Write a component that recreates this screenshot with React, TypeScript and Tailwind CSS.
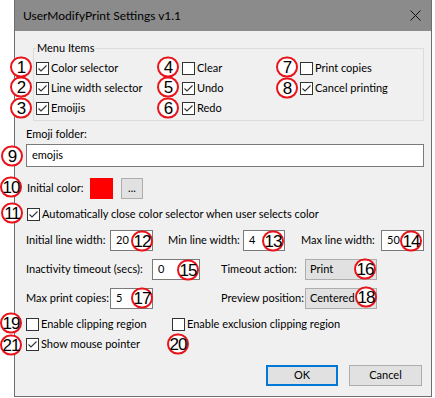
import React from "react";

const font = { fontFamily: "Lato, 'Liberation Sans', sans-serif" };

function Check({ checked = false }: { checked?: boolean }) {
  return (
    <span className="inline-flex w-[13px] h-[13px] shrink-0 border border-[#333333] bg-white items-center justify-center">
      {checked && (
        <svg width="11" height="11" viewBox="0 0 11 11">
          <polyline points="1.5,5.5 4,8 9.5,2.5" fill="none" stroke="#333333" strokeWidth="1.1" />
        </svg>
      )}
    </span>
  );
}

function CheckItem({ label, checked }: { label: string; checked?: boolean }) {
  return (
    <div className="flex items-center gap-[2px] h-[20px]">
      <Check checked={checked} />
      <span>{label}</span>
    </div>
  );
}

function Field({ value, w }: { value: string; w: string }) {
  return (
    <div className={`h-[21px] ${w} bg-white border border-[#7a7a7a] flex items-center pl-[5px]`}>{value}</div>
  );
}

// red numbered markers over the dialog
const marks: [number, number, number][] = [
  [1, 21, 67], [2, 21, 87], [3, 21, 108],
  [4, 168, 67], [5, 168, 87], [6, 168, 108],
  [7, 287, 67], [8, 287, 88],
  [9, 12, 156], [10, 11, 187], [11, 12, 213],
  [12, 142, 241], [13, 273, 241], [14, 411, 241],
  [15, 188, 270], [16, 365, 269],
  [17, 142, 298], [18, 366, 297],
  [19, 11, 323], [20, 178, 344], [21, 11, 345],
];

export default function App() {
  return (
    <div className="relative w-[435px] h-[398px] bg-white overflow-hidden text-[11px] text-black" style={font}>
      <div className="ml-[14px] w-[418px] h-[397px] border-x border-b border-[#6e6e6e] bg-[#f0f0f0] flex flex-col">
        {/* title bar */}
        <div className="h-[31px] bg-[#8b8b8b] flex items-center justify-between pl-[8px] pr-[10px] text-[12px]">
          <span>UserModifyPrint Settings v1.1</span>
          <svg width="11" height="11" viewBox="0 0 11 11">
            <path d="M0.5 0.5 L10.5 10.5 M10.5 0.5 L0.5 10.5" stroke="#111" strokeWidth="1" />
          </svg>
        </div>

        <div className="flex flex-col pl-[11px] pr-[7px] pt-[10px]">
          <fieldset className="ml-[7px] h-[80px] border border-[#dcdcdc] pl-[2px]">
            <legend className="px-[1px] leading-[14px] ml-[0px]">Menu Items</legend>
            <div className="grid grid-cols-[146px_118px_1fr] pt-[3px]">
              <div>
                <CheckItem label="Color selector" checked />
                <CheckItem label="Line width selector" checked />
                <CheckItem label="Emoijis" checked />
              </div>
              <div>
                <CheckItem label="Clear" />
                <CheckItem label="Undo" checked />
                <CheckItem label="Redo" checked />
              </div>
              <div>
                <CheckItem label="Print copies" />
                <CheckItem label="Cancel printing" checked />
              </div>
            </div>
          </fieldset>

          <div className="mt-[6px] h-[15px] flex items-center">Emoji folder:</div>
          <div className="mt-[2px] h-[23px] bg-white border border-[#7a7a7a] flex items-center pl-[5px]">emojis</div>

          <div className="mt-[11px] h-[21px] flex items-center">
            <span className="w-[64px] pl-[1px]">Initial color:</span>
            <span className="w-[23px] h-[21px] bg-[#ff0000]" />
            <span className="ml-[8px] w-[22px] h-[21px] bg-[#e1e1e1] border border-[#adadad] flex items-center justify-center leading-none pb-[3px]">...</span>
          </div>

          <div className="mt-[8px] h-[14px] flex items-center gap-[2px] pl-[1px]">
            <Check checked />
            <span>Automatically close color selector when user selects color</span>
          </div>

          <div className="mt-[9px] h-[21px] flex items-center">
            <span className="w-[84px]">Initial line width:</span>
            <Field value="20" w="w-[43px]" />
            <span className="ml-[15px] w-[75px]">Min line width:</span>
            <Field value="4" w="w-[42px]" />
            <span className="ml-[16px] w-[80px]">Max line width:</span>
            <Field value="50" w="w-[43px]" />
          </div>

          <div className="mt-[8px] h-[21px] flex items-center">
            <span className="w-[126px]">Inactivity timeout (secs):</span>
            <Field value="0" w="w-[48px]" />
            <span className="ml-[21px] w-[84px]">Timeout action:</span>
            <div className="w-[72px] h-[21px] bg-[#e1e1e1] border border-[#adadad] flex items-center pl-[4px]">Print</div>
          </div>

          <div className="mt-[8px] h-[21px] flex items-center">
            <span className="w-[84px]">Max print copies:</span>
            <Field value="5" w="w-[43px]" />
            <span className="ml-[68px] w-[84px]">Preview position:</span>
            <div className="w-[72px] h-[21px] bg-[#e1e1e1] border border-[#adadad] flex items-center pl-[4px]">Centered</div>
          </div>

          <div className="mt-[8px] h-[14px] flex items-center">
            <div className="w-[146px] flex items-center gap-[2px]">
              <Check />
              <span>Enable clipping region</span>
            </div>
            <div className="flex items-center gap-[2px]">
              <Check />
              <span>Enable exclusion clipping region</span>
            </div>
          </div>

          <div className="mt-[6px] h-[14px] flex items-center gap-[2px]">
            <Check checked />
            <span>Show mouse pointer</span>
          </div>

          <div className="mt-[14px] mr-[2px] flex justify-end gap-[11px]">
            <div className="w-[72px] h-[21px] bg-[#e1e1e1] border-2 border-[#0078d7] flex items-center justify-center">OK</div>
            <div className="w-[73px] h-[21px] bg-[#e1e1e1] border border-[#adadad] flex items-center justify-center">Cancel</div>
          </div>
        </div>
      </div>

      {marks.map(([n, x, y]) => (
        <div
          key={n}
          className="absolute w-[22px] h-[21px] -translate-x-1/2 -translate-y-1/2 rounded-full border-2 border-[#e8141b] bg-white flex items-center justify-center text-[17px] leading-none tracking-[-1px]"
          style={{ left: x, top: y, fontFamily: "'Liberation Sans', Arial, sans-serif" }}
        >
          {n}
        </div>
      ))}
    </div>
  );
}
